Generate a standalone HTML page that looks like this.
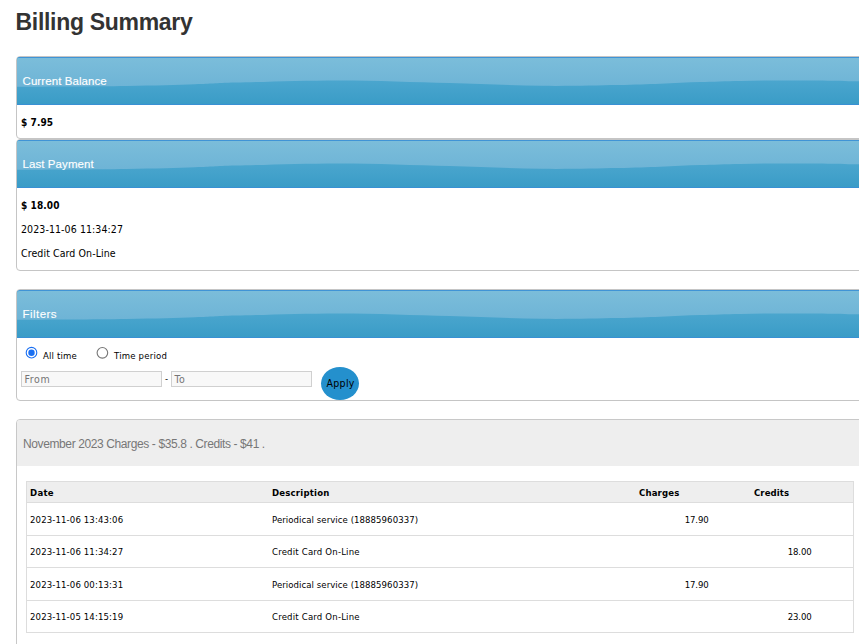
<!DOCTYPE html>
<html>
<head>
<meta charset="utf-8">
<title>Billing Summary</title>
<style>
*{box-sizing:border-box}
html,body{margin:0;padding:0;background:#fff}
body{width:859px;height:644px;overflow:hidden;position:relative;font-family:"Liberation Sans",sans-serif;font-size:11px;color:#000}
h1{position:absolute;left:15.5px;top:7px;margin:0;font-size:23px;letter-spacing:-.3px;line-height:30px;font-weight:bold;color:#333;white-space:nowrap}
.panel{position:absolute;left:16px;width:860px;background:#fff;border:1px solid #c5c5c5;border-radius:4px;overflow:hidden}
.ph{position:relative;height:48px;border-top:1px solid #4094d6;border-bottom:1px solid #3990d4;background:#3f9dc9;overflow:hidden}
.ph svg{position:absolute;left:0;top:0;display:block}
.ph span{position:absolute;left:5.5px;top:13.5px;color:#fff;-webkit-text-stroke:.12px #fff;font-size:11.5px;letter-spacing:.08px;line-height:18px;white-space:nowrap}
.pb{padding:11px 4px 9px}
.ln{height:24px;line-height:13px;white-space:nowrap;font-family:"DejaVu Sans Condensed","Liberation Sans",sans-serif;font-size:10.5px}
.gh{height:46px;background:#eee;color:#777;font-size:12px;letter-spacing:-.39px;line-height:46px;padding:1px 0 0 6px;white-space:nowrap}

.rsvg{position:absolute;display:block}
.rl{position:absolute;font-family:"DejaVu Sans Condensed","Liberation Sans",sans-serif;font-size:9.5px;letter-spacing:.15px;line-height:12px;white-space:nowrap;color:#000}
.inp{position:absolute;width:141px;height:16px;border:1px solid #d0d0d0;background:#f8f8f8;color:#757575;font-family:"DejaVu Sans Condensed","Liberation Sans",sans-serif;font-size:10.5px;letter-spacing:.6px;line-height:15px;padding-left:2.5px;white-space:nowrap}
.apply{position:absolute;left:304px;top:77px;width:38px;height:33px;border-radius:50%;background:#2490cd;color:#000;font-family:"DejaVu Sans Condensed","Liberation Sans",sans-serif;font-size:10.5px;letter-spacing:.35px;text-align:center;line-height:32.8px;padding-left:1.2px}
.tbl{position:absolute;left:9px;top:61px;width:828px;height:152px;border:1px solid #ddd;font-family:"DejaVu Sans Condensed","Liberation Sans",sans-serif;font-size:9.5px}
.tr{position:absolute;left:0;width:826px;border-bottom:1px solid #ddd}
.tr.th{top:0;height:21px;background:#eee;font-weight:bold}
.tr span{position:absolute;top:50%;margin-top:-5.5px;line-height:12px;white-space:nowrap}

</style>
</head>
<body>
<h1>Billing Summary</h1>

<div class="panel" style="top:56px;height:83px">
  <div class="ph"><svg width="860" height="46" viewBox="0 0 860 46"><rect x="0" y="0" width="860" height="46" fill="url(#gd)"/><path d="M0,0 V28.8 C28.2,28.63 79.3,28.42 109.0,28.00 C138.7,27.58 159.7,26.87 178.0,26.30 C196.3,25.73 194.8,25.25 219.0,24.60 C243.2,23.95 287.3,22.33 323.0,22.40 C358.7,22.47 399.3,24.10 433.0,25.00 C466.7,25.90 497.2,27.47 525.0,27.80 C552.8,28.13 580.3,27.35 600.0,27.00 C619.7,26.65 629.2,26.18 643.0,25.70 C656.8,25.22 669.7,24.55 683.0,24.10 C696.3,23.65 707.5,23.28 723.0,23.00 C738.5,22.72 756.2,22.37 776.0,22.40 C795.8,22.43 826.3,22.97 842.0,23.20 C857.7,23.43 860.3,23.58 870.0,23.80 V0 Z" fill="url(#gl)"/></svg><span>Current Balance</span></div>
  <div class="pb"><div class="ln"><b style="font-size:10px;letter-spacing:.1px">$ 7.95</b></div></div>
</div>

<div class="panel" style="top:139px;height:132px">
  <div class="ph"><svg width="860" height="46" viewBox="0 0 860 46"><rect x="0" y="0" width="860" height="46" fill="url(#gd)"/><path d="M0,0 V28.8 C28.2,28.63 79.3,28.42 109.0,28.00 C138.7,27.58 159.7,26.87 178.0,26.30 C196.3,25.73 194.8,25.25 219.0,24.60 C243.2,23.95 287.3,22.33 323.0,22.40 C358.7,22.47 399.3,24.10 433.0,25.00 C466.7,25.90 497.2,27.47 525.0,27.80 C552.8,28.13 580.3,27.35 600.0,27.00 C619.7,26.65 629.2,26.18 643.0,25.70 C656.8,25.22 669.7,24.55 683.0,24.10 C696.3,23.65 707.5,23.28 723.0,23.00 C738.5,22.72 756.2,22.37 776.0,22.40 C795.8,22.43 826.3,22.97 842.0,23.20 C857.7,23.43 860.3,23.58 870.0,23.80 V0 Z" fill="url(#gl)"/></svg><span>Last Payment</span></div>
  <div class="pb"><div class="ln"><b style="font-size:10px;letter-spacing:.1px">$ 18.00</b></div><div class="ln" style="letter-spacing:.09px">2023-11-06 11:34:27</div><div class="ln" style="letter-spacing:.09px">Credit Card On-Line</div></div>
</div>

<div class="panel" style="top:289px;height:112px;overflow:visible">
  <div class="ph" style="border-radius:3px 0 0 0"><svg width="860" height="46" viewBox="0 0 860 46"><rect x="0" y="0" width="860" height="46" fill="url(#gd)"/><path d="M0,0 V28.8 C28.2,28.63 79.3,28.42 109.0,28.00 C138.7,27.58 159.7,26.87 178.0,26.30 C196.3,25.73 194.8,25.25 219.0,24.60 C243.2,23.95 287.3,22.33 323.0,22.40 C358.7,22.47 399.3,24.10 433.0,25.00 C466.7,25.90 497.2,27.47 525.0,27.80 C552.8,28.13 580.3,27.35 600.0,27.00 C619.7,26.65 629.2,26.18 643.0,25.70 C656.8,25.22 669.7,24.55 683.0,24.10 C696.3,23.65 707.5,23.28 723.0,23.00 C738.5,22.72 756.2,22.37 776.0,22.40 C795.8,22.43 826.3,22.97 842.0,23.20 C857.7,23.43 860.3,23.58 870.0,23.80 V0 Z" fill="url(#gl)"/></svg><span style="letter-spacing:.45px">Filters</span></div>
  <svg class="rsvg" style="left:7px;top:55px" width="16" height="16" viewBox="0 0 16 16"><circle cx="7.5" cy="7.7" r="5.3" fill="#fff" stroke="#1a6ff2" stroke-width="1.1"/><circle cx="7.5" cy="7.7" r="3.2" fill="#1a6ff2"/></svg><span class="rl" style="left:26px;top:60.3px;letter-spacing:.15px">All time</span>
  <svg class="rsvg" style="left:78px;top:55px" width="16" height="16" viewBox="0 0 16 16"><circle cx="7.4" cy="7.8" r="5.3" fill="#fff" stroke="#767676" stroke-width="1.1"/></svg><span class="rl" style="left:97px;top:60.3px;letter-spacing:.2px">Time period</span>
  <div class="inp" style="left:4px;top:81px">From</div><span class="rl" style="left:148px;top:83px">-</span>
  <div class="inp" style="left:154px;top:81px">To</div>
  <div class="apply"><span>Apply</span></div>
</div>

<div class="panel" style="top:419px;height:260px;border-color:#c8c8c8">
  <div class="gh">November 2023 Charges - $35.8 . Credits - $41 .</div>
  <div class="tbl">
    <div class="tr th"><span style="left:3px;letter-spacing:.3px">Date</span><span style="left:245px;letter-spacing:.2px">Description</span><span style="left:612px;letter-spacing:.15px">Charges</span><span style="left:727px;letter-spacing:.1px">Credits</span></div>
    <div class="tr" style="top:21px;height:33px"><span style="left:3px;letter-spacing:.13px">2023-11-06 13:43:06</span><span style="left:245px;letter-spacing:.07px">Periodical service (18885960337)</span><span class="r" style="right:144.3px;letter-spacing:-.08px">17.90</span></div>
    <div class="tr" style="top:54px;height:32px"><span style="left:3px;letter-spacing:.13px">2023-11-06 11:34:27</span><span style="left:245px;letter-spacing:.19px">Credit Card On-Line</span><span class="r" style="right:41.3px;letter-spacing:-.08px">18.00</span></div>
    <div class="tr" style="top:86px;height:33px"><span style="left:3px;letter-spacing:.13px">2023-11-06 00:13:31</span><span style="left:245px;letter-spacing:.07px">Periodical service (18885960337)</span><span class="r" style="right:144.3px;letter-spacing:-.08px">17.90</span></div>
    <div class="tr" style="top:119px;height:32px"><span style="left:3px;letter-spacing:.13px">2023-11-05 14:15:19</span><span style="left:245px;letter-spacing:.19px">Credit Card On-Line</span><span class="r" style="right:41.3px;letter-spacing:-.08px">23.00</span></div>
  </div>
</div>

<svg width="0" height="0" style="position:absolute">
  <defs>
    <linearGradient id="gl" gradientUnits="userSpaceOnUse" x1="0" y1="0" x2="0" y2="28"><stop offset="0" stop-color="#7bbdda"/><stop offset="1" stop-color="#6eb4d6"/></linearGradient>
    <linearGradient id="gd" gradientUnits="userSpaceOnUse" x1="0" y1="22" x2="0" y2="46"><stop offset="0" stop-color="#4ba6ce"/><stop offset="1" stop-color="#3a9cc7"/></linearGradient>
    
  </defs>
</svg>
</body>
</html>
